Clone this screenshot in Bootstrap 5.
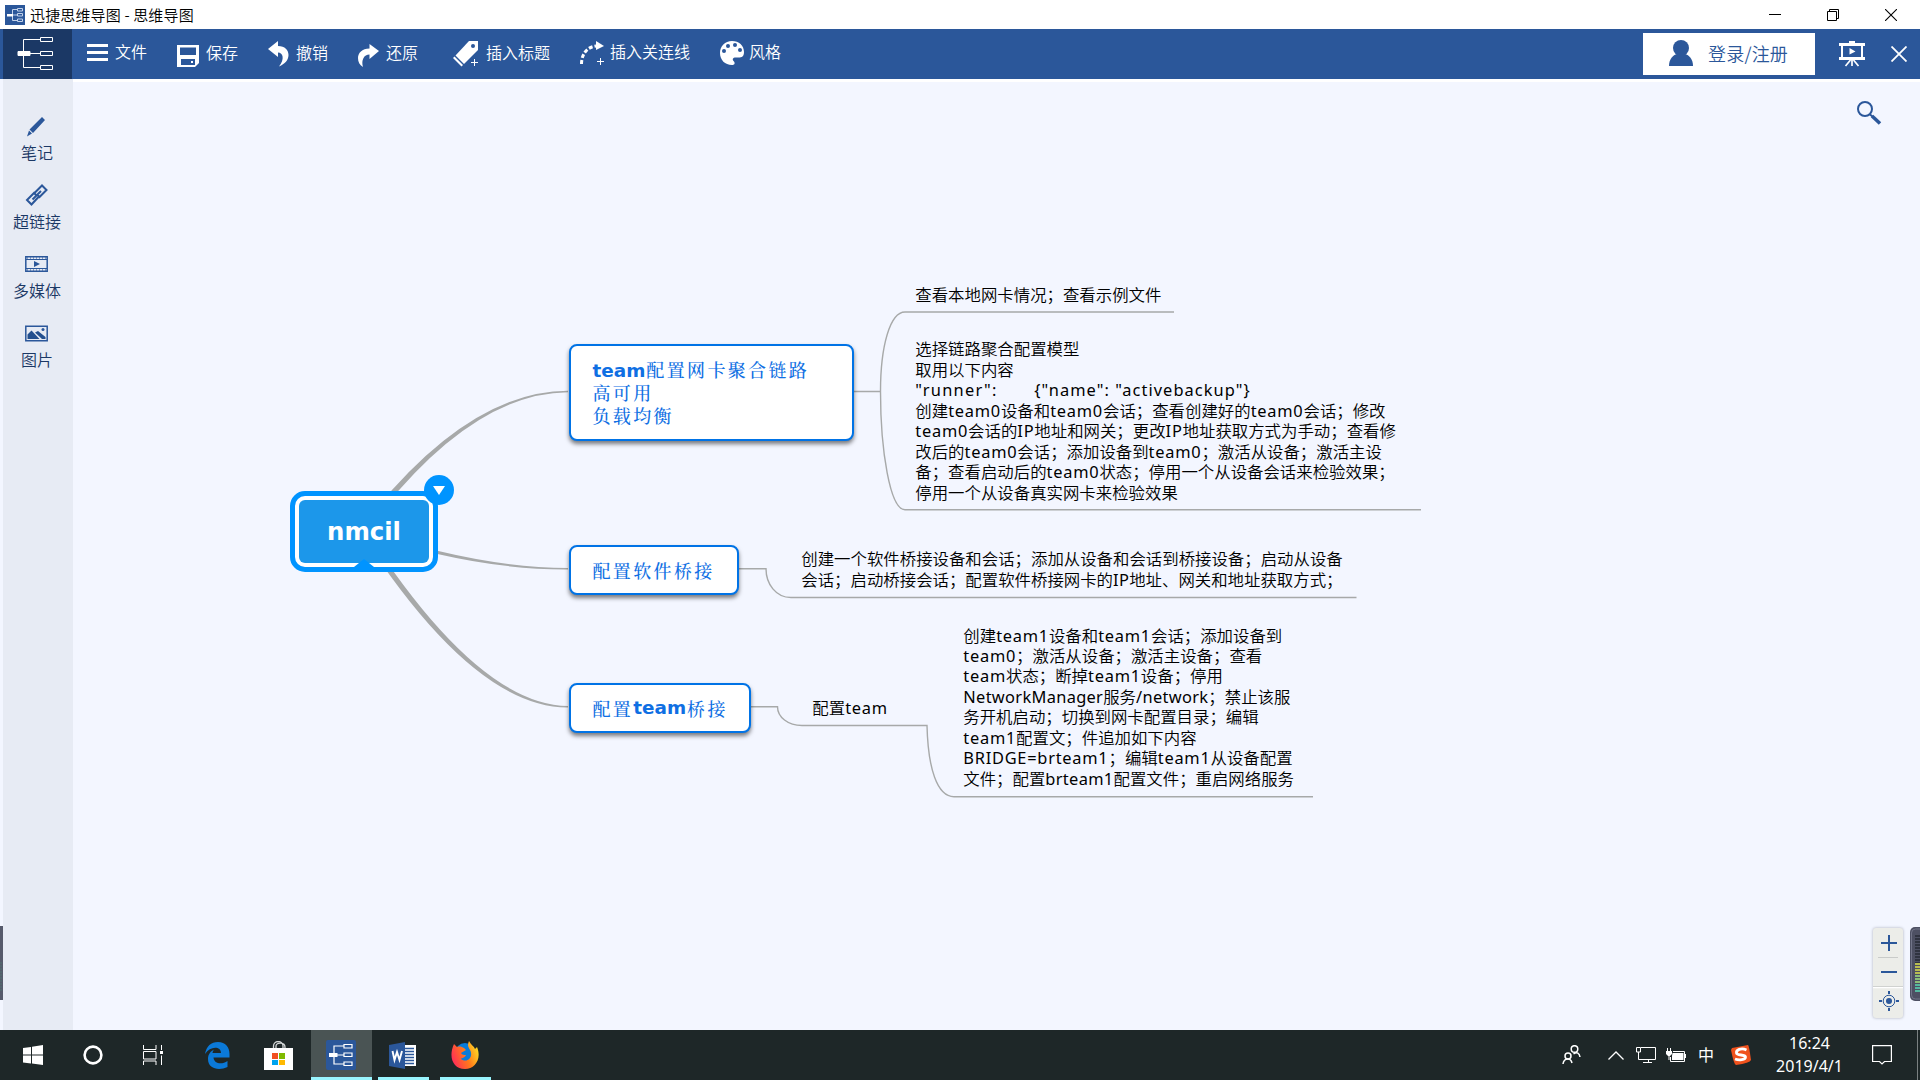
<!DOCTYPE html>
<html lang="zh-CN">
<head>
<meta charset="utf-8">
<title>迅捷思维导图 - 思维导图</title>
<link href="https://cdn.jsdelivr.net/npm/bootstrap@5.3.0/dist/css/bootstrap.min.css" rel="stylesheet">
<style>
:root{--brand:#2b579a;--navy:#1b3865;--paper:#f3f6ff}
body{width:1920px;height:1080px;overflow:hidden;background:var(--paper);font-family:"Noto Sans CJK SC",sans-serif;font-size:16px;line-height:1;color:#000}
svg{display:block;flex:none}
.titlebar{height:29px;background:#fff;font-size:15px;padding:0 23px 0 5px}
.titlebar .caption{margin-left:5px;line-height:27px;padding-bottom:1px;letter-spacing:.15px;font-weight:350}
.winbtns{gap:46px}
.toolbar{height:50px;background:var(--brand);color:#fff}
.logo-tile{width:69px;height:50px;margin-left:3px;background:var(--navy)}
.tools{gap:30px;margin-left:15px;padding-bottom:1px}
.tool{gap:7px;font-weight:350;white-space:nowrap}
.tool span{padding-bottom:3px}
.tool .up{padding-bottom:5px}
.login{width:172px;height:42px;background:#fff;color:var(--brand);font-size:18px;font-weight:350;gap:14px;padding-left:26px;padding-bottom:1px}
.login span{padding-bottom:1px;letter-spacing:.2px}
.sidebar{width:70px;margin-left:3px;background:#e7ebf4;color:var(--navy);padding-top:35px;font-weight:350}
.side-item{height:69px;padding-right:2px}
.side-item svg{margin:0 2px 6px 0}
.board{background:var(--paper);border-top:3px solid #fff;height:951px}
.work{height:951px}
.links{position:absolute;left:0;top:0}
.node{position:absolute;background:#fff;border:2.5px solid #0073e6;border-radius:8px;box-shadow:0 3px 4px rgba(0,0,0,.5);color:#0f6fe3;font-size:18px;font-weight:500;letter-spacing:2.35px;line-height:23px;padding:0 0 0 21.5px;font-family:"Noto Serif CJK SC","Noto Sans CJK SC",serif;white-space:nowrap}
.node b{font:700 18.4px/1 "DejaVu Sans",sans-serif;letter-spacing:0;padding-right:1px}
.n1{left:496px;top:262px;width:284.5px;height:97px}
.n2{left:496px;top:463px;width:169.5px;height:50px}
.n3{left:496px;top:601px;width:182px;height:50px}
.root-node{position:absolute;left:217px;top:408.5px;width:148px;height:81.5px;border:5px solid #0094ff;border-radius:15px;background:#fff;padding:4px}
.root-fill{background:#1c97ea;border-radius:6px;height:100%;color:#fff;font:700 24.4px "DejaVu Sans",sans-serif;padding-top:1px}
.overlay-a{position:absolute;left:350.5px;top:393px}
.overlay-b{position:absolute;left:280.5px;top:477px}
.leaf{position:absolute;font-size:16.42px;font-weight:350;line-height:20.55px;white-space:pre}
.leaf i{font:400 16.4px/1 "Noto Sans",sans-serif;letter-spacing:.75px}
.l1{left:842.3px;top:202px}.l2{left:842.3px;top:256px}.l3{left:728.3px;top:466px}.l4{left:739.3px;top:614.5px}.l5{left:890.3px;top:542.5px;line-height:20.45px}
.leaf .run-key{display:inline-block;width:119px;letter-spacing:1.25px}
.leaf .run-val{letter-spacing:1.05px}
.leaf .snug{letter-spacing:.32px}
.search{position:absolute;left:1784px;top:19px}
.zoomer{position:absolute;left:1800px;top:846px;width:30px;height:90px;background:#ecede9;border-radius:3px;box-shadow:0 0 3px #aaacb8}
.meter{position:absolute;z-index:2;overflow:hidden}
.meter-r{left:1910px;top:927px}.meter-l{left:0;top:926px}
.taskbar{height:50px;background:#1e2728;color:#fff;border-bottom:0}
.cell{height:50px;display:flex;align-items:center;justify-content:center;flex:none}
.run{border-bottom:3px solid #99f5ff}
.run svg{margin:3px 2px 0 0}
.act{background:#4a5454;width:61px;margin-left:3px}
.w11{width:51px}
.clock{width:96px;font:400 16px/23px "Noto Sans","Noto Sans CJK SC",sans-serif;text-align:center}
</style>
<script src="https://cdn.jsdelivr.net/npm/bootstrap@5.3.0/dist/js/bootstrap.bundle.min.js"></script>
</head>
<body>
<svg width="0" height="0" class="position-absolute">
  <defs>
    <g id="tree" fill="none" stroke="#fff"><path d="M6.500 15V1.500H23M6.500 15V29.500H23M12 15.500H23"/><path d="M23.500-.5h12v4h-12zM23.500 13.500h12v4h-12zM23.500 27.500h12v4h-12z" fill="#1b3865"/><path d="M1 13.500h12v4H1z" fill="#fff"/></g>
  </defs>
</svg>
<header>
  <div class="titlebar d-flex align-items-center">
    <svg width="20" height="20" viewBox="0 0 20 20"><path fill="#2b579a" d="M0 0h20v20H0z"/><g fill="none" stroke="#c3d2ea"><path d="M12 4.500H7.500v11H12M7 10H12"/><path d="M12.500 3.500h5v2.500h-5zM12.500 8.500h5V11h-5zM12.500 14h5v2.500h-5z"/></g><path fill="#fff" d="M2 9h6v2.500H2z"/></svg>
    <span class="caption">迅捷思维导图 - 思维导图</span>
    <div class="winbtns d-flex ms-auto">
      <svg width="12" height="12"><path d="M0 5.500H12" stroke="#000"/></svg>
      <svg width="12" height="12" viewBox="0 0 12 12" fill="none" stroke="#000"><path d="M.5 2.500h9v9h-9zM2.500 2.500v-2h9v9h-2"/></svg>
      <svg width="12" height="12" stroke="#000" stroke-width="1.100"><path d="M0 0L12 12M12 0L0 12"/></svg>
    </div>
  </div>
  <div class="toolbar d-flex align-items-center">
    <div class="logo-tile d-flex align-items-center"><svg width="38" height="34" viewBox="-1 -1 38 34" style="margin-left:13px"><use href="#tree"/></svg></div>
    <nav class="tools d-flex align-items-center">
      <div class="tool d-flex align-items-center"><svg width="21" height="18" fill="#fff" class="mb-1"><path d="M0 1h21v3H0zM0 8h21v3H0zM0 15h21v3H0z"/></svg><span class="up">文件</span></div>
      <div class="tool d-flex align-items-center"><svg width="22" height="22" fill="#fff" class="mt-1"><path fill-rule="evenodd" d="M0 0H22V18L18 22H0zM3 2.500V10H19V2.500zM4 14V20H18V14zM14 16h2v2h-2z"/></svg><span>保存</span></div>
      <div class="tool d-flex align-items-center"><svg width="21" height="26" viewBox="0 0 21 26" fill="#fff"><path d="M0 8L10 0V5C17 5 20.500 9 20.500 14 20.500 19 17 23 11 25.500 17 18 15 11.500 10 11.500V16z"/></svg><span>撤销</span></div>
      <div class="tool d-flex align-items-center"><svg width="21" height="24" viewBox="0 0 21 24" fill="#fff" class="mt-1"><path d="M21 7L11.500 0V4.500C4 4.500 0 9 0 14 0 18 1.500 21 5 23 3 16 6 10.500 11.500 10.500V15z"/></svg><span>还原</span></div>
      <div class="tool d-flex align-items-center" style="margin-left:5px"><svg width="26" height="26" viewBox="0 0 26 26"><path d="M16 0H25V9L11 23 2.500 14.500z" fill="#fff"/><path d="M1.500 15.500L10 24 8.500 25.500 0 17z" fill="#fff"/><circle cx="20" cy="5" r="2" fill="#2b579a"/><path d="M18 21.500h7M21.500 18v7" stroke="#fff"/></svg><span>插入标题</span></div>
      <div class="tool d-flex align-items-center" style="gap:6px"><svg width="24" height="25" viewBox="0 0 24 25"><path d="M1.500 23C1.500 13 7 6 16 5" fill="none" stroke="#fff" stroke-width="3" stroke-dasharray="4 2"/><path d="M16 0L24 5 16 9z" fill="#fff"/><path d="M17 20.500h7M20.500 17v7" stroke="#fff"/></svg><span class="up">插入关连线</span></div>
      <div class="tool d-flex align-items-center" style="gap:5px"><svg width="24" height="25" viewBox="0 0 24 25"><path d="M12 0C19 0 24 4.500 24 11 24 16 21 17 17 16.500 13 16 11.500 18 14 20.500 15.500 23 14 24 12 24 5 24 0 19 0 12 0 5 5 0 12 0z" fill="#fff"/><g fill="#2b579a"><circle cx="4" cy="10" r="2"/><circle cx="8" cy="5" r="2"/><circle cx="15" cy="4" r="2"/><circle cx="20" cy="9" r="2"/></g></svg><span class="up">风格</span></div>
    </nav>
    <div class="login d-flex align-items-center ms-auto"><svg width="25" height="27" viewBox="0 0 25 27" fill="#2b579a"><circle cx="12" cy="8" r="8"/><path d="M0 26C0 19 4 15 8 14H16C20 15 24 19 24 26z"/></svg><span>登录/注册</span></div>
    <svg width="26" height="26" viewBox="0 0 26 26" style="margin:0 26px 0 24px"><path d="M10 0h6v3h-6zM0 2h26v3H0zM0 16h26v3H0zM2 4h2v13H2zM22 4h2v13h-2zM10.500 7L16.500 10.500 10.500 13.500z" fill="#fff"/><path d="M13 18v7M11.500 19L6.500 25M14.500 19L19.500 25" stroke="#fff" stroke-width="1.700"/></svg>
    <svg width="16" height="16" style="margin-right:13px"><path d="M.5.500L15.500 15.500M15.500.500L.5 15.500" stroke="#fff" stroke-width="1.800"/></svg>
  </div>
</header>
<div class="work d-flex">
  <aside class="sidebar">
    <div class="side-item d-flex flex-column align-items-center"><svg width="23" height="24" viewBox="0 0 23 24" fill="#2b579a"><path d="M17 3L20 6 8 19 4.500 15.500zM4 16.500L7 19.500 2 22.500z"/></svg>笔记</div>
    <div class="side-item d-flex flex-column align-items-center"><svg width="23" height="24" viewBox="0 0 23 24" fill="none" stroke="#2b579a" stroke-width="2"><path d="M9.500 10L17 2.500 21.500 7 14.500 14 12.500 12M13.500 14L6.500 21.500 2 17 9 10 11 12M7.500 16.500L16 8"/></svg>超链接</div>
    <div class="side-item d-flex flex-column align-items-center"><svg width="23" height="24" viewBox="0 0 23 24"><path d="M.8 4.800h21.400v14.400H.8z" fill="none" stroke="#2b579a" stroke-width="1.500"/><path d="M1 7.500h21M1 16.500h21" stroke="#2b579a"/><path d="M2 6h20M2 18h20" stroke="#2b579a" stroke-dasharray="1 2"/><path d="M9 9L15 12 9 15z" fill="#2b579a"/></svg>多媒体</div>
    <div class="side-item d-flex flex-column align-items-center"><svg width="23" height="24" viewBox="0 0 23 24"><path d="M.8 5.300h21.400v14.400H.8z" fill="none" stroke="#2b579a" stroke-width="1.500"/><path d="M2.500 18V13.500L6.500 9.500 14.500 18zM10 11.500L13 10 20.500 16V18H17z" fill="#24508f"/><circle cx="18" cy="8.500" r="1.500" fill="#2b579a"/></svg>图片</div>
  </aside>
  <main class="board flex-grow-1 position-relative">
    <svg class="links" width="1847" height="948" viewBox="73 82 1847 948">
      <g fill="#a7a9a9">
        <path d="M359.500 529.500Q465 391 568 390.800V392.200Q468 393 364.500 533z"/>
        <path d="M363 529Q476 567.500 568 568V569.400Q474 570 363 533z"/>
        <path d="M365 529.500Q478 705 568 706V707.400Q474 708 361 533z"/>
      </g>
      <g fill="none" stroke="#a7a9a9" stroke-width="1.400">
        <path d="M853 391.500H880.500M905 312C890 312 880.500 346 880.500 391.500 880.500 450 890 509.700 905 509.700H1421M905 312H1174"/>
        <path d="M739 568.700H766C766 584 776 597.500 791 597.500H1356.500"/>
        <path d="M751 706.700H777.500C777.500 717 788 725.500 802 725.500H927C928 768 937 796.700 954 796.700H1313"/>
      </g>
    </svg>
    <section class="root-node"><div class="root-fill d-flex align-items-center justify-content-center">nmcil</div></section>
    <svg class="overlay-a" width="30" height="30"><circle cx="15" cy="15" r="15" fill="#0094ff"/><path d="M9 11h12l-6 9z" fill="#fff"/></svg>
    <svg class="overlay-b" width="20" height="9"><path d="M0 8L10 0 20 8z" fill="#0094ff"/></svg>
    <section class="node n1 d-flex flex-column justify-content-center"><div><b>team</b>配置网卡聚合链路</div><div>高可用</div><div>负载均衡</div></section>
    <section class="node n2 d-flex align-items-center">配置软件桥接</section>
    <section class="node n3 d-flex align-items-center">配置<b>team</b>桥接</section>
    <div class="leaf l1">查看本地网卡情况；查看示例文件</div>
    <div class="leaf l2"><div>选择链路聚合配置模型</div><div>取用以下内容</div><div><i class="run-key">"runner":</i><i class="run-val">{"name": "activebackup"}</i></div><div>创建<i>team0</i>设备和<i>team0</i>会话；查看创建好的<i>team0</i>会话；修改</div><div><i>team0</i>会话的<i>IP</i>地址和网关；更改<i>IP</i>地址获取方式为手动；查看修</div><div>改后的<i>team0</i>会话；添加设备到<i>team0</i>；激活从设备；激活主设</div><div>备；查看启动后的<i>team0</i>状态；停用一个从设备会话来检验效果；</div><div>停用一个从设备真实网卡来检验效果</div></div>
    <div class="leaf l3"><div>创建一个软件桥接设备和会话；添加从设备和会话到桥接设备；启动从设备</div><div>会话；启动桥接会话；配置软件桥接网卡的<i class="snug">IP</i>地址、网关和地址获取方式；</div></div>
    <div class="leaf l4">配置<i>team</i></div>
    <div class="leaf l5"><div>创建<i>team1</i>设备和<i>team1</i>会话；添加设备到</div><div><i>team0</i>；激活从设备；激活主设备；查看</div><div><i>team</i>状态；断掉<i>team1</i>设备；停用</div><div><i class="snug">NetworkManager</i>服务<i class="snug">/network</i>；禁止该服</div><div>务开机启动；切换到网卡配置目录；编辑</div><div><i>team1</i>配置文；件追加如下内容</div><div><i>BRIDGE=brteam1</i>；编辑<i>team1</i>从设备配置</div><div>文件；配置<i class="snug">brteam1</i>配置文件；重启网络服务</div></div>
    <svg class="search" width="26" height="25" fill="none" stroke="#2b579a"><circle cx="8" cy="8" r="7" stroke-width="2"/><path d="M13 13.500L15.500 15.500" stroke-width="2"/><path d="M15 15L23 22.500" stroke-width="3.500"/></svg>
    <div class="zoomer"><svg width="30" height="90" viewBox="0 0 30 90" fill="none" stroke="#2b579a" stroke-width="2"><path d="M8 15h16M16 7v16M8 44h16"/><path d="M5 29.500h20" stroke="#c9cbc9" stroke-width="1"/><path d="M0 59.500h30" stroke="#fff" stroke-width="1.500"/><path d="M0 58.500h30" stroke="#d0d2d0" stroke-width="1"/><circle cx="16" cy="73" r="5.800" stroke-width="1"/><circle cx="16" cy="73" r="3" fill="#2b579a" stroke="none"/><path d="M6 73h3M23 73h3M16 63v3M16 80v3"/></svg></div>
  </main>
</div>
<svg class="meter meter-r" width="10" height="74"><rect width="20" height="74" rx="5" fill="#4d5063"/><rect x="1.500" y="2" width="20" height="70" rx="4" fill="none" stroke="#717488"/><path d="M7.500 8V36" stroke="#2f3340" stroke-width="5" stroke-dasharray="2 1"/><path d="M7.500 36V48" stroke="#b9bd50" stroke-width="5" stroke-dasharray="2 1"/><path d="M7.500 48V57" stroke="#8bbf78" stroke-width="5" stroke-dasharray="2 1"/><path d="M7.500 57V66" stroke="#55b9a0" stroke-width="5" stroke-dasharray="2 1"/></svg>
<svg class="meter meter-l" width="3" height="74"><path d="M0 0h3v74H0z" fill="#565a6b"/><path d="M1 36v30" stroke="#4f7370" stroke-dasharray="2 1"/></svg>
<footer class="taskbar d-flex">
  <div class="cell" style="width:66px"><svg width="20" height="20" fill="#fff"><path d="M0 3L8 2V9.500H0zM9 1.800L20 0V9.500H9zM0 10.500H8V18.500L0 17.500zM9 10.500H20V20L9 18.500z"/></svg></div>
  <div class="cell" style="width:54px"><svg width="20" height="20"><circle cx="10" cy="10" r="8.400" fill="none" stroke="#fff" stroke-width="2.600"/></svg></div>
  <div class="cell" style="width:66px"><svg width="20" height="20" fill="none" stroke="#fff"><path d="M.5 0V4.500H13V0M.5 6.500H13V14H.5zM.5 20V16H13V20M18.500 0V5M18.500 10.500V20"/><path d="M17 6h3v3h-3z" fill="#fff" stroke="none"/></svg></div>
  <div class="cell" style="width:62px"><svg width="25" height="27" viewBox="0 0 25 27"><path d="M0 12C1.500 4 6 0 13 0 20.500 0 24.500 5 24.500 12V15.500H8.500C9 22 17 23 22.500 19V25C14 29 3 27 3 17 3 12 6 9 9 7.500 8 9 7.500 10 7.500 11H16C16 4 5 4 0 12z" fill="#0b79d8"/></svg></div>
  <div class="cell" style="width:60px"><svg width="29" height="29" viewBox="0 0 29 29"><path d="M9.500 8V5C9.500-1 19-1 19 5V8M12 8V5C12 1 21 1 21 6V8" fill="none" stroke="#d5d8d8" stroke-width="1.300"/><path d="M0 7h29v22H0z" fill="#fff"/><path d="M8 12h6v6H8z" fill="#f25022"/><path d="M15 12h6v6h-6z" fill="#7fba00"/><path d="M8 19h6v5H8z" fill="#00a4ef"/><path d="M15 19h6v5h-6z" fill="#ffb900"/></svg></div>
  <div class="cell run act"><svg width="30" height="30" viewBox="0 0 30 30"><rect width="30" height="30" rx="2" fill="#2b579a"/><g fill="none" stroke="#fff" stroke-width="1.200"><path d="M18 6H8V24H18M8 15H18M18 4.500h8V8H18zM18 13h8v3.500H18zM18 22h8v3.500H18z"/></g><path fill="#fff" d="M3 13h8.500v4H3z"/></svg></div>
  <div class="cell run w11" style="margin-left:6px"><svg width="27" height="27" viewBox="0 0 27 27"><path fill="#fff" d="M15 3H27V24H15z"/><path d="M16 6.500h9M16 9.500h9M16 12.500h9M16 15.500h9M16 18.500h9M16 21.500h9" stroke="#2b579a" stroke-width="1.300"/><path fill="#2b579a" d="M0 3L16 0V27L0 24z"/><path d="M3.500 9L5.500 18 8 10 10.500 18 13 9" fill="none" stroke="#fff" stroke-width="1.900"/></svg></div>
  <div class="cell run w11" style="margin-left:11px"><svg width="28" height="28" viewBox="0 0 28 28"><defs><linearGradient id="fx" x1="0" y1=".6" x2="1" y2=".2"><stop stop-color="#ff2f56"/><stop offset=".5" stop-color="#ff7a1a"/><stop offset="1" stop-color="#ffe226"/></linearGradient></defs><circle cx="14" cy="12" r="10" fill="#087bd9"/><path d="M3 3L6 6C9 5 11 6 13 7L15 9 10 12C11 14 13 14 15 14 13 18 9 17 10 18 15 22 21 18 20 12 20 8 15 7 18 0 20 4 23 5 24 8L26 6C31 18 24 28 14 28 2 28-3 16 3 3z" fill="url(#fx)"/></svg></div>
  <div class="d-flex ms-auto">
    <div class="cell" style="width:38px;margin-right:11px"><svg width="19" height="20" fill="none" stroke="#fff" stroke-width="1.500"><circle cx="12.500" cy="4" r="3.300"/><circle cx="6" cy="11" r="3"/><path d="M1 19C1.500 15 3.500 14 6 14S9.500 16 10 18M11.500 9C15 6.500 17.500 8 18 12"/></svg></div>
    <div class="cell" style="width:30px"><svg width="16" height="9" fill="none" stroke="#fff" stroke-width="1.300"><path d="M.5 8.500L8 1 15.500 8.500"/></svg></div>
    <div class="cell" style="width:30px"><svg width="20" height="17" fill="none" stroke="#fff"><path d="M5 .5H19.500V12.500H2.500V7M12.500 12.500V16M7 15.500H16M.5.500H4.500V5H.5zM2.500 5V7"/></svg></div>
    <div class="cell" style="width:30px"><svg width="20" height="15"><path d="M7 3.500H18.500V13.500H4.500V9" fill="none" stroke="#fff"/><path d="M6.500 5H17.500V12H6V8zM19 6h1v4h-1zM0 3H6V6L4 8H2L0 6zM1 0h1v3H1zM4 0h1v3H4zM2.500 8h1v4h-1z" fill="#fff"/></svg></div>
    <div class="cell" style="width:30px;font-size:16px;padding-bottom:2px">中</div>
    <div class="cell" style="width:40px"><svg width="20" height="20" viewBox="0 0 20 20"><path d="M1 3L17 0Q18 0 20 15 19 18 5 20 3 20 0 5z" fill="#f0521d"/><path d="M15.500 5C10 2.500 5 5 5.500 8 6 11 14 9 14.500 12 14.500 15 8 15.500 4 14" fill="none" stroke="#fff" stroke-width="2.800"/></svg></div>
    <div class="cell"><div class="clock" style="padding-left:1px">16:24<br>2019/4/1</div></div>
    <div class="cell" style="width:50px"><svg width="20" height="20" fill="none" stroke="#fff" stroke-width="1.200"><path d="M.6.600H19.400V16.500H12.500L10 19 7.500 16.500H.6z"/></svg></div>
    <div style="width:3px;margin-left:10px;border-left:1px solid #7b8182"></div>
  </div>
</footer>
</body>
</html>
